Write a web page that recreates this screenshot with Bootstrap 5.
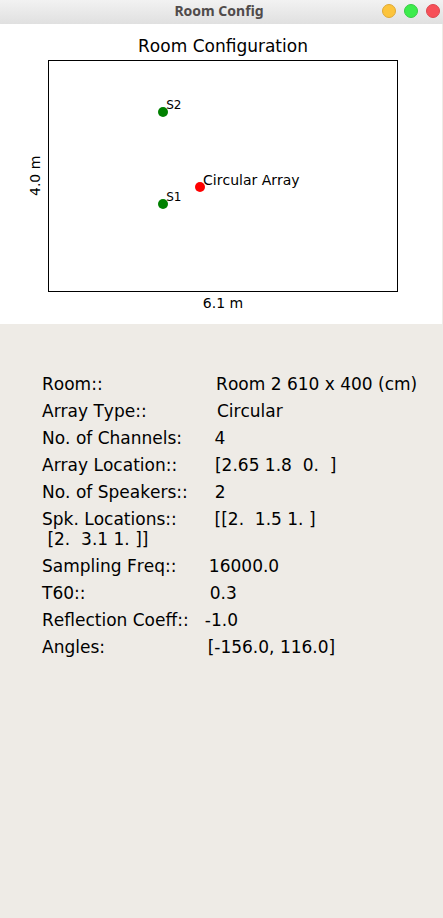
<!DOCTYPE html>
<html lang="en">
<head>
<meta charset="utf-8">
<meta name="viewport" content="width=device-width, initial-scale=1">
<title>Room Config</title>
<link rel="stylesheet" href="https://cdn.jsdelivr.net/npm/bootstrap@5.3.0/dist/css/bootstrap.min.css">
<style>
body { font-family: "DejaVu Sans", sans-serif; font-kerning: none; background: #eeebe6; color: #000; }
.titlebar { height: 24px; padding: 0 3px 2px 0; background: linear-gradient(#f2f2f2, #e0e0e0); }
.titlebar h1 { font: bold 14px/20px "Noto Sans", sans-serif; color: #504b4b; padding-left: 56px; }
.win-btn { width: 14px; height: 14px; border: 1px solid; border-radius: 50%; padding: 0; }
.win-min { background: #fcc43c; border-color: #dfa935; }
.win-max { background: #3cec4c; border-color: #36cc44; }
.win-close { background: #f75058; border-color: #dc484f; }
.figure-area { height: 300px; padding: 12px 44px 0 26px; border-right: 1px solid #eeebe6; }
.figure-area h2 { font-size: 17px; line-height: 20px; margin: 0 0 4px 22px; }
.axis-label { font-size: 14px; line-height: 18px; }
.axis-y { writing-mode: vertical-rl; transform: rotate(180deg); width: 22px; padding-left: 4px; }
.axis-x { margin: 2px 0 0 22px; }
.plot { height: 232px; border: 1px solid #000; }
.source { width: 10px; height: 10px; margin: -4px -5px; border-radius: 50%; background: #008000; }
.source span { position: absolute; left: 8px; bottom: 5px; font-size: 12px; line-height: 14px; white-space: nowrap; }
.source.mic { background: #f00; }
.source.mic span { font-size: 14px; }
.settings { padding: 50px 0 0 42px; gap: 7px; font-size: 17px; line-height: 20px; }
.settings li { white-space: pre; }
</style>
</head>
<body>
<header class="titlebar d-flex align-items-center">
  <h1 class="flex-grow-1 text-center mb-0">Room Config</h1>
  <div class="d-flex gap-2">
    <button type="button" class="win-btn win-min" aria-label="Minimize"></button>
    <button type="button" class="win-btn win-max" aria-label="Maximize"></button>
    <button type="button" class="win-btn win-close" aria-label="Close"></button>
  </div>
</header>
<main>
  <section class="figure-area bg-white">
    <h2 class="text-center fw-normal">Room Configuration</h2>
    <div class="d-flex">
      <div class="axis-label axis-y text-center">4.0 m</div>
      <div class="plot position-relative flex-grow-1">
        <div class="source position-absolute" style="left:32.8%;bottom:77.5%"><span>S2</span></div>
        <div class="source position-absolute" style="left:32.8%;bottom:37.5%"><span>S1</span></div>
        <div class="source mic position-absolute" style="left:43.4%;bottom:45%"><span>Circular Array</span></div>
      </div>
    </div>
    <div class="axis-label axis-x text-center">6.1 m</div>
  </section>
  <ul class="settings list-unstyled d-flex flex-column mb-0">
    <li>Room::                     Room 2 610 x 400 (cm)</li>
    <li>Array Type::             Circular</li>
    <li>No. of Channels:      4</li>
    <li>Array Location::       [2.65 1.8  0.  ]</li>
    <li>No. of Speakers::     2</li>
    <li>Spk. Locations::       [[2.  1.5 1. ]
 [2.  3.1 1. ]]</li>
    <li>Sampling Freq::      16000.0</li>
    <li>T60::                       0.3</li>
    <li>Reflection Coeff::   -1.0</li>
    <li>Angles:                   [-156.0, 116.0]</li>
  </ul>
</main>
<script src="https://cdn.jsdelivr.net/npm/bootstrap@5.3.0/dist/js/bootstrap.bundle.min.js"></script>
</body>
</html>
